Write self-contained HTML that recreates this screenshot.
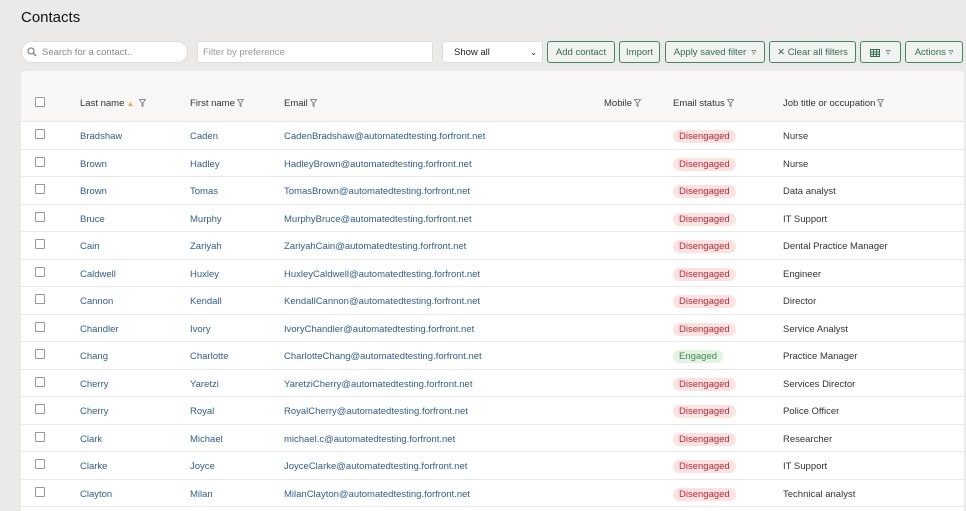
<!DOCTYPE html>
<html><head><style>
*{box-sizing:border-box;margin:0;padding:0}
body{width:966px;height:504px;overflow:hidden;background:#ebeae8;font-family:"Liberation Sans",sans-serif;font-size:9.5px;color:#333;position:relative}
.t{position:absolute;left:21px;top:9px;font-size:15px;color:#111}
.in{position:absolute;top:41px;height:22px;background:#fff;border:1px solid #ddd;color:#999;font-size:9.5px;display:flex;align-items:center;padding-left:5px;padding-top:1px}
.btn{position:absolute;top:41px;height:22px;border:1px solid #3d8a62;border-radius:3px;color:#2e7050;font-size:9.5px;display:flex;align-items:center;justify-content:center;padding-top:1px;background:#f2f2f0}
.tbl{position:absolute;left:21px;top:71px;width:943px;height:440px;background:#fff;border-radius:5px 5px 0 0;overflow:hidden}
.hd{position:absolute;left:0;top:0;width:100%;height:51px;background:#f8f7f5;border-bottom:1px solid #e6e6e6}
.c{position:absolute;white-space:nowrap}
.cb{position:absolute;left:14px;width:10px;height:10px;border:1px solid #999;border-radius:1px;background:#fff}
.row{position:absolute;left:0;width:100%;height:27.5px;border-bottom:1px solid #e8e8e8}
.row .c{top:9px}
.lk{color:#2d5f8a}
.b{position:absolute;left:652px;top:8px;height:13px;border-radius:7px;padding:0 6px;line-height:13px;font-size:9.5px}
.d{background:#fbe3e3;color:#c0282e}
.e{background:#e2f3e4;color:#3b8a4a}
.f{display:inline-block;width:7px;height:8px;margin-left:2px;vertical-align:-1px}
</style></head><body>
<div class="t">Contacts</div>
<div class="in" style="left:21px;width:167px;border-radius:11px;padding-left:20px;color:#888">Search for a contact..</div>
<svg style="position:absolute;left:27px;top:47px" width="10" height="10"><circle cx="4" cy="4" r="3" fill="none" stroke="#888" stroke-width="1.3"/><line x1="6.3" y1="6.3" x2="9" y2="9" stroke="#888" stroke-width="1.5"/></svg>
<div class="in" style="left:197px;width:236px;border-radius:3px">Filter by preference</div>
<div class="in" style="left:442px;width:101px;border-radius:3px;color:#222;padding-left:11px">Show all<span style="position:absolute;right:5px;font-size:8px">⌄</span></div>
<div class="btn" style="left:547px;width:68px">Add contact</div>
<div class="btn" style="left:619px;width:41px">Import</div>
<div class="btn" style="left:665px;width:100px">Apply saved filter &nbsp;▿</div>
<div class="btn" style="left:769px;width:87px">✕ Clear all filters</div>
<div class="btn" style="left:860px;width:41px"><svg width="10" height="8" viewBox="0 0 10 8"><rect x="0.5" y="0.5" width="9" height="7" fill="none" stroke="#2e7050"/><line x1="0" y1="3" x2="10" y2="3" stroke="#2e7050"/><line x1="0" y1="5.3" x2="10" y2="5.3" stroke="#2e7050"/><line x1="3.5" y1="0" x2="3.5" y2="8" stroke="#2e7050"/><line x1="6.5" y1="0" x2="6.5" y2="8" stroke="#2e7050"/></svg>&nbsp;&nbsp;▿</div>
<div class="btn" style="left:905px;width:58px">Actions ▿</div>
<div class="tbl">
<div class="hd">
<div class="cb" style="top:26px"></div>
<div class="c" style="left:59px;top:27px">Last name <span style="color:#f0a030;font-size:7px">▲</span> <svg class="f" viewBox="0 0 7 8"><path d="M0.5 0.5H6.5L4 4V7.5L3 7V4Z" fill="none" stroke="#777" stroke-width="0.8"/></svg></div>
<div class="c" style="left:169px;top:27px">First name<svg class="f" viewBox="0 0 7 8"><path d="M0.5 0.5H6.5L4 4V7.5L3 7V4Z" fill="none" stroke="#777" stroke-width="0.8"/></svg></div>
<div class="c" style="left:263px;top:27px">Email<svg class="f" viewBox="0 0 7 8"><path d="M0.5 0.5H6.5L4 4V7.5L3 7V4Z" fill="none" stroke="#777" stroke-width="0.8"/></svg></div>
<div class="c" style="left:583px;top:27px">Mobile<svg class="f" viewBox="0 0 7 8"><path d="M0.5 0.5H6.5L4 4V7.5L3 7V4Z" fill="none" stroke="#777" stroke-width="0.8"/></svg></div>
<div class="c" style="left:652px;top:27px">Email status<svg class="f" viewBox="0 0 7 8"><path d="M0.5 0.5H6.5L4 4V7.5L3 7V4Z" fill="none" stroke="#777" stroke-width="0.8"/></svg></div>
<div class="c" style="left:762px;top:27px">Job title or occupation<svg class="f" viewBox="0 0 7 8"><path d="M0.5 0.5H6.5L4 4V7.5L3 7V4Z" fill="none" stroke="#777" stroke-width="0.8"/></svg></div>
</div>
<div id="rows"></div>
</div>
<script>
var d=[["Bradshaw","Caden","CadenBradshaw","Nurse"],["Brown","Hadley","HadleyBrown","Nurse"],["Brown","Tomas","TomasBrown","Data analyst"],["Bruce","Murphy","MurphyBruce","IT Support"],["Cain","Zariyah","ZariyahCain","Dental Practice Manager"],["Caldwell","Huxley","HuxleyCaldwell","Engineer"],["Cannon","Kendall","KendallCannon","Director"],["Chandler","Ivory","IvoryChandler","Service Analyst"],["Chang","Charlotte","CharlotteChang","Practice Manager",1],["Cherry","Yaretzi","YaretziCherry","Services Director"],["Cherry","Royal","RoyalCherry","Police Officer"],["Clark","Michael","michael.c","Researcher"],["Clarke","Joyce","JoyceClarke","IT Support"],["Clayton","Milan","MilanClayton","Technical analyst"]];
var h="";d.forEach(function(r,i){var t=51+i*27.5;h+='<div class="row" style="top:'+t+'px"><div class="cb" style="top:7px"></div><div class="c lk" style="left:59px">'+r[0]+'</div><div class="c lk" style="left:169px">'+r[1]+'</div><div class="c lk" style="left:263px">'+r[2]+'@automatedtesting.forfront.net</div>'+(r[4]?'<div class="b e">Engaged</div>':'<div class="b d">Disengaged</div>')+'<div class="c" style="left:762px">'+r[3]+'</div></div>';});
document.getElementById("rows").innerHTML=h;
</script>
</body></html>
